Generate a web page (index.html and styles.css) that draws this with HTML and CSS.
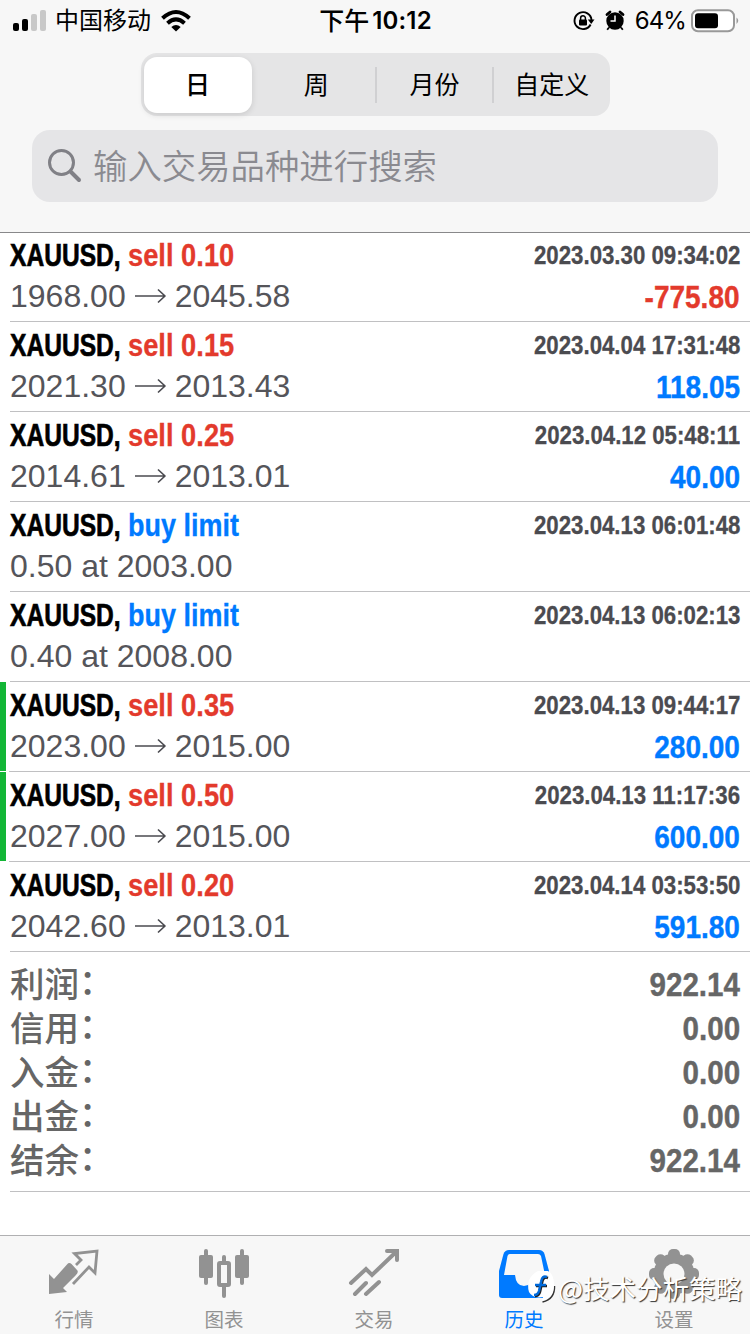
FILE: index.html
```html
<!DOCTYPE html>
<html lang="zh-CN">
<head>
<meta charset="utf-8">
<title>历史</title>
<link rel="stylesheet" href="styles.css">
</head>
<body>
<div class="screen">
  <header class="header">
    <div class="status">
      <div class="status-left">
        <svg class="signal" width="34" height="22" viewBox="0 0 34 22"><rect x="0" y="13" width="6" height="8" rx="2"/><rect x="9" y="9" width="6" height="12" rx="2"/><rect x="18" y="4" width="6" height="17" rx="2" fill="#c8c8c8"/><rect x="27" y="0" width="6" height="21" rx="2" fill="#c8c8c8"/></svg>
        <span class="carrier">中国移动</span>
        <svg class="wifi" width="30" height="22" viewBox="0 0 30 22"><g fill="none" stroke="#000" stroke-width="4"><path d="M1.500 8.200Q15-4.200 28.500 8.200"/><path d="M6.500 13.300Q15 5.600 23.500 13.300"/></g><path d="M15 21.500L10.300 16.900Q15 13 19.700 16.900Z"/></svg>
      </div>
      <div class="clock"><span class="meridiem">下午</span><span>10:12</span></div>
      <div class="status-right">
        <svg class="lock" width="22" height="20" viewBox="0 0 22 20"><path d="M17.600 13.500A8.500 8.500 0 1 1 18.500 9" fill="none" stroke="#000" stroke-width="1.900"/><path d="M14.800 8.500H21.500L18.200 13Z"/><rect x="6" y="8.600" width="8" height="6" rx="1"/><path d="M7.600 9V7.200a2.400 2.400 0 0 1 4.800 0V9" fill="none" stroke="#000" stroke-width="1.500"/></svg>
        <svg class="alarm" width="20" height="21" viewBox="0 0 20 21"><circle cx="10" cy="11" r="8.700"/><path d="M2 4.500L5 2M18 4.500L15 2" stroke="#000" stroke-width="2.800" stroke-linecap="round"/><path d="M4 17.500L2.200 19.800M16 17.500L17.800 19.800" stroke="#000" stroke-width="1.800"/><path d="M10 5.500V11H5.500" fill="none" stroke="#fff" stroke-width="1.500"/></svg>
        <span class="percent">64%</span>
        <svg class="battery" width="48" height="24" viewBox="0 0 48 24"><rect x="2" y="1.200" width="42" height="21" rx="6" fill="#fff" stroke="#999" stroke-width="2"/><rect x="5" y="4.200" width="23" height="15" rx="3"/><path d="M46.500 8.500Q50 11.700 46.500 15Z" fill="#999"/></svg>
      </div>
    </div>
    <nav class="segments">
      <span class="segment active">日</span><span class="segment">周</span><span class="segment divided">月份</span><span class="segment divided">自定义</span>
    </nav>
    <div class="search">
      <svg width="34" height="34" viewBox="0 0 34 34" fill="none" stroke="#808086"><circle cx="13.500" cy="13.500" r="12" stroke-width="3"/><path d="M22.500 22.500L31 31" stroke-width="4" stroke-linecap="round"/></svg>
      <span class="placeholder">输入交易品种进行搜索</span>
    </div>
  </header>

  <main class="deals">
    <article class="deal">
      <div class="line"><b class="symbol">XAUUSD,</b><b class="side red">sell 0.10</b><b class="date">2023.03.30 09:34:02</b></div>
      <div class="line second"><span class="price">1968.00</span><svg class="arrow" viewBox="0 0 31 16"><path d="M0 8H30M23 1.500L30 8L23 14.500"/></svg><span class="price">2045.58</span><b class="amount red">-775.80</b></div>
    </article>
    <article class="deal">
      <div class="line"><b class="symbol">XAUUSD,</b><b class="side red">sell 0.15</b><b class="date">2023.04.04 17:31:48</b></div>
      <div class="line second"><span class="price">2021.30</span><svg class="arrow" viewBox="0 0 31 16"><path d="M0 8H30M23 1.500L30 8L23 14.500"/></svg><span class="price">2013.43</span><b class="amount blue">118.05</b></div>
    </article>
    <article class="deal">
      <div class="line"><b class="symbol">XAUUSD,</b><b class="side red">sell 0.25</b><b class="date">2023.04.12 05:48:11</b></div>
      <div class="line second"><span class="price">2014.61</span><svg class="arrow" viewBox="0 0 31 16"><path d="M0 8H30M23 1.500L30 8L23 14.500"/></svg><span class="price">2013.01</span><b class="amount blue">40.00</b></div>
    </article>
    <article class="deal">
      <div class="line"><b class="symbol">XAUUSD,</b><b class="side blue">buy limit</b><b class="date">2023.04.13 06:01:48</b></div>
      <div class="line second"><span class="price">0.50 at 2003.00</span></div>
    </article>
    <article class="deal">
      <div class="line"><b class="symbol">XAUUSD,</b><b class="side blue">buy limit</b><b class="date">2023.04.13 06:02:13</b></div>
      <div class="line second"><span class="price">0.40 at 2008.00</span></div>
    </article>
    <article class="deal marked">
      <div class="line"><b class="symbol">XAUUSD,</b><b class="side red">sell 0.35</b><b class="date">2023.04.13 09:44:17</b></div>
      <div class="line second"><span class="price">2023.00</span><svg class="arrow" viewBox="0 0 31 16"><path d="M0 8H30M23 1.500L30 8L23 14.500"/></svg><span class="price">2015.00</span><b class="amount blue">280.00</b></div>
    </article>
    <article class="deal marked">
      <div class="line"><b class="symbol">XAUUSD,</b><b class="side red">sell 0.50</b><b class="date">2023.04.13 11:17:36</b></div>
      <div class="line second"><span class="price">2027.00</span><svg class="arrow" viewBox="0 0 31 16"><path d="M0 8H30M23 1.500L30 8L23 14.500"/></svg><span class="price">2015.00</span><b class="amount blue">600.00</b></div>
    </article>
    <article class="deal">
      <div class="line"><b class="symbol">XAUUSD,</b><b class="side red">sell 0.20</b><b class="date">2023.04.14 03:53:50</b></div>
      <div class="line second"><span class="price">2042.60</span><svg class="arrow" viewBox="0 0 31 16"><path d="M0 8H30M23 1.500L30 8L23 14.500"/></svg><span class="price">2013.01</span><b class="amount blue">591.80</b></div>
    </article>
    <section class="summary">
      <div class="total"><span>利润</span><i>：</i><b>922.14</b></div>
      <div class="total"><span>信用</span><i>：</i><b>0.00</b></div>
      <div class="total"><span>入金</span><i>：</i><b>0.00</b></div>
      <div class="total"><span>出金</span><i>：</i><b>0.00</b></div>
      <div class="total"><span>结余</span><i>：</i><b>922.14</b></div>
    </section>
  </main>

  <footer class="tabs">
    <div class="tab"><svg width="52" height="52" viewBox="0 0 52 52"><path fill="#929292" d="M1 23L6 28L19 13.500Q21 11 23.500 13L29 19Q31 21 28 24L15 37L19 41L1 43Z"/><path fill="none" stroke="#929292" stroke-width="2.800" d="M28 14L33 9L26.500 2.500L49 0L47 22L41 16L25 33"/></svg><span>行情</span></div>
    <div class="tab"><svg width="52" height="52" viewBox="0 0 52 52" fill="#929292"><rect x="6" y="-2" width="4" height="36" rx="2"/><rect x="1" y="4" width="14" height="23" rx="2"/><rect x="42" y="-2" width="4" height="36" rx="2"/><rect x="37" y="4" width="14" height="23" rx="2"/><rect x="24" y="4" width="4" height="10" rx="2"/><rect x="24" y="34" width="4" height="13" rx="2"/><rect x="21" y="12" width="10" height="22" rx="1" fill="#f7f7f7" stroke="#929292" stroke-width="4"/></svg><span>图表</span></div>
    <div class="tab"><svg width="52" height="52" viewBox="0 0 52 52" fill="none" stroke="#929292" stroke-width="4" stroke-linecap="round"><path d="M3 32L18 18L24 24L48 1M39 0H49V9M7 43L18 32M18 43L31 31"/></svg><span>交易</span></div>
    <div class="tab current"><svg width="52" height="52" viewBox="0 0 52 52"><path fill="#007aff" d="M11 -1H41Q45 -1 46.500 3L51 20V44Q51 47 48 47H4Q1 47 1 44V20L5.500 3Q7 -1 11 -1Z"/><path fill="#f7f7f7" d="M12 3H40Q42 3 43 5L47 24H36Q34 35 26 35Q18 35 17 24H6L9.500 5Q10 3 12 3Z"/></svg><span>历史</span></div>
    <div class="tab"><svg width="52" height="52" viewBox="0 0 52 52"><g fill="#929292"><circle cx="26" cy="23" r="20.500"/><rect x="20" y="-2" width="12" height="50" rx="5"/><rect x="20" y="-2" width="12" height="50" rx="5" transform="rotate(45 26 23)"/><rect x="20" y="-2" width="12" height="50" rx="5" transform="rotate(90 26 23)"/><rect x="20" y="-2" width="12" height="50" rx="5" transform="rotate(135 26 23)"/></g><circle cx="26" cy="23" r="10.500" fill="#f7f7f7"/></svg><span>设置</span></div>
    <div class="watermark">
      <svg width="30" height="32" viewBox="0 0 30 32"><path fill="none" stroke="#333" stroke-width="1.500" d="M26.500 14Q27 27 14.500 30"/><path fill="#fff" d="M10 -1H20Q26 2 26 13Q26 26 14 29L15 25Q5 27 1 20Q-3 6 10 -1Z"/><path fill="none" stroke="#222" stroke-width="2.500" d="M20 6Q15 4 14 11L12 20Q11 24 7 24M8 14H19"/><path fill="none" stroke="#0069d9" stroke-width="2.500" d="M19 5Q14 3 13 10L11 19Q10 23 6 23M7 13H18"/></svg>
      <span>@技术分析策略</span>
    </div>
  </footer>
</div>
</body>
</html>
```
FILE: styles.css
```css
* { box-sizing: border-box; }
body { margin: 0; background: #fff; font-family: "Liberation Sans", "Noto Sans CJK SC", sans-serif; }
svg { display: block; overflow: visible; flex: none; }
.screen { width: 750px; height: 1334px; display: flex; flex-direction: column; overflow: hidden; }
.header { height: 233px; flex: none; background: #f7f7f7; border-bottom: 1px solid #88888a; display: flex; flex-direction: column; align-items: center; }
.status { width: 100%; height: 40px; padding: 0 12px 0 13px; display: grid; grid-template-columns: 1fr auto 1fr; align-items: center; font-family: Inter, "Noto Sans CJK SC", sans-serif; font-size: 24px; line-height: 40px; color: #000; }
.status-left, .status-right { display: flex; align-items: center; }
.status-right { justify-content: flex-end; }
.carrier { margin: 0 10px 0 8px; padding-top: 1px; }
.clock { display: flex; gap: 3px; padding-top: 1px; font-weight: 600; letter-spacing: 0.2px; }
.meridiem { font-size: 25px; font-weight: 500; letter-spacing: 0; }
.alarm { margin: 0 10px; }
.percent { margin-right: 4px; padding-top: 1px; letter-spacing: -0.9px; }
.segments { width: 469px; height: 63px; margin-top: 13px; padding: 3px 0; border-radius: 16px; background: #e5e5e6; display: grid; grid-template-columns: repeat(4, 1fr); align-items: center; font: 25px/52px "Noto Sans CJK SC", sans-serif; text-align: center; color: #000; }
.segment { height: 56px; }
.segment.active { margin: 0 6px 0 3px; background: #fff; border-radius: 13px; font-weight: 500; box-shadow: 0 2px 6px rgba(0, 0, 0, .12); }
.segment.divided { height: 36px; line-height: 32px; border-left: 2px solid #d0d0d2; }
.search { width: 686px; height: 72px; margin-top: 14px; padding: 0 16px; border-radius: 18px; background: #e5e5e7; display: flex; align-items: center; gap: 11px; }
.placeholder { padding-bottom: 4px; font: 34.400px/68px "Noto Sans CJK SC", sans-serif; font-weight: 350; color: #8a8a90; }
.deals { flex: 1; }
.deal { height: 90px; padding: 2px 10px 0 0; margin-left: 10px; border-bottom: 1px solid #c0c0c2; }
.deal:first-child { height: 89px; padding-top: 1px; }
.deal.marked { margin-left: 0; padding-left: 10px; border-image: linear-gradient(90deg, #fff 10px, #c0c0c2 10px) 1; background: linear-gradient(#13b636, #13b636) 0 0 / 6px 89px no-repeat; }
.line { height: 42px; display: flex; align-items: center; font-size: 32px; line-height: 42px; white-space: nowrap; }
.second { color: #55555a; }
.price { height: 42px; line-height: 40px; }
.symbol { width: 118px; transform: scaleX(.768); transform-origin: 0 50%; color: #000; -webkit-text-stroke: .7px; }
.side { transform: scaleX(.853); transform-origin: 0 50%; -webkit-text-stroke: .3px; }
.side.blue { transform: scaleX(.843); }
.date { margin-left: auto; font-size: 26px; color: #4b4b50; transform: scaleX(.855); transform-origin: 100% 50%; -webkit-text-stroke: .3px; }
.amount { margin-left: auto; transform: scaleX(.875); transform-origin: 100% 50%; -webkit-text-stroke: .4px; }
.red { color: #e33a2c; }
.blue { color: #007aff; }
.arrow { width: 31px; height: 16px; margin: 0 9px 2px; fill: none; stroke: #4b4b50; stroke-width: 1.700; stroke-linejoin: round; }
.summary { height: 240px; margin-left: 10px; padding: 9px 10px 0 0; border-bottom: 1px solid #c0c0c2; color: #666; }
.total { height: 44px; display: flex; align-items: center; font: 500 34.500px/44px "Noto Sans CJK SC", sans-serif; }
.total span { height: 46px; }
.total i { height: 52px; font-style: normal; }
.total b { margin-left: auto; padding-top: 2px; font-family: "Liberation Sans", sans-serif; font-size: 34px; font-weight: 700; transform: scaleX(.87); transform-origin: 100% 50%; -webkit-text-stroke: .4px; }
.tabs { position: relative; height: 99px; flex: none; padding-right: 2px; border-top: 1px solid #b0b0b2; background: #f7f7f7; display: grid; grid-template-columns: repeat(5, 150px); margin-left: -1px; }
.tab { padding-top: 15px; display: flex; flex-direction: column; align-items: center; color: #929292; font: 19.500px/32px "Noto Sans CJK SC", sans-serif; }
.tab.current { color: #007aff; }
.watermark { position: absolute; left: 529px; top: 35px; display: flex; align-items: center; color: #fff; font: 26.500px/34px "Noto Sans CJK SC", sans-serif; text-shadow: 1px 1px 1px #333; white-space: nowrap; }
```
